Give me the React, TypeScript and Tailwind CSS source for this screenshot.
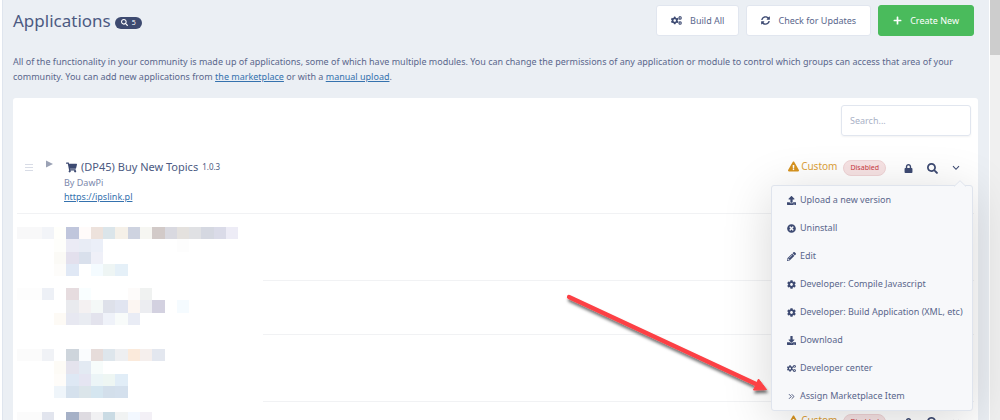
import React, { useState } from 'react';
import {
  FaCog,
  FaCogs,
  FaDownload,
  FaExclamationTriangle,
  FaLock,
  FaPencilAlt,
  FaPlus,
  FaSearch,
  FaShoppingCart,
  FaSyncAlt,
  FaTimesCircle,
  FaUpload,
} from 'react-icons/fa';

type Cell = [col: number, row: number, color: string];

interface HiddenApp {
  id: number;
  rows: number;
  className: string;
  cells: Cell[];
}

function AngleDoubleRight({ className }: { className?: string }) {
  return (
    <svg viewBox="0 0 9 9" className={className} fill="none" stroke="currentColor" strokeWidth="0.9">
      <path d="M2 2.200 4.300 4.500 2 6.800M4.700 2.200 7 4.500 4.700 6.800" />
    </svg>
  );
}

const menuItems = [
  { label: 'Upload a new version', icon: FaUpload },
  { label: 'Uninstall', icon: FaTimesCircle },
  { label: 'Edit', icon: FaPencilAlt },
  { label: 'Developer: Compile Javascript', icon: FaCog },
  { label: 'Developer: Build Application (XML, etc)', icon: FaCog },
  { label: 'Download', icon: FaDownload },
  { label: 'Developer center', icon: FaCogs },
  { label: 'Assign Marketplace Item', icon: AngleDoubleRight },
];

const hiddenApps: HiddenApp[] = [
  {
    id: 2,
    rows: 4,
    className: 'h-[67px] pt-[13px]',
    cells: [
      [0, 0, '#f8f8f9'], [1, 0, '#f8f8f9'], [2, 0, '#f2f4f8'], [3, 0, '#fffffb'], [4, 0, '#c0c6dc'],
      [5, 0, '#fffbfa'], [6, 0, '#ede2dc'], [7, 0, '#dbe5ea'], [8, 0, '#f5f0e8'], [9, 0, '#ced3e0'],
      [10, 0, '#f6f6f2'], [11, 0, '#d2cac8'], [12, 0, '#d9d9e0'], [13, 0, '#e4e1de'], [14, 0, '#e0e1e4'],
      [15, 0, '#d5d8e1'], [16, 0, '#dadbe8'], [17, 0, '#edecf6'],
      [3, 1, '#fefefb'], [4, 1, '#ebebf5'], [5, 1, '#e8ecf5'], [6, 1, '#ebeff8'], [13, 1, '#fdfdfd'],
      [3, 2, '#fbfaf6'], [4, 2, '#e3e0ed'], [5, 2, '#d9e0ec'], [6, 2, '#eff0f8'],
      [3, 3, '#fdfcfa'], [4, 3, '#e0e8f5'], [6, 3, '#f4fbff'], [7, 3, '#eef5f4'], [8, 3, '#e5f0f8'],
    ],
  },
  {
    id: 3,
    rows: 3,
    className: 'h-[54px] pt-[7px]',
    cells: [
      [0, 0, '#fdfdfd'], [1, 0, '#fdfdfd'], [2, 0, '#edf0f6'], [4, 0, '#e6dcdf'], [5, 0, '#f9feff'],
      [9, 0, '#fdfbfa'], [10, 0, '#f0f2f1'],
      [4, 1, '#e9eaee'], [5, 1, '#f4f1f2'], [6, 1, '#f4f8f7'], [7, 1, '#dee1ea'], [8, 1, '#e1e5f1'],
      [9, 1, '#fcf6f2'], [10, 1, '#ecedf1'], [11, 1, '#d3d1e0'], [13, 1, '#f5fbff'],
      [3, 2, '#fdfaf5'], [4, 2, '#e7e8f1'], [5, 2, '#e9ecf2'], [6, 2, '#e3e3ed'], [7, 2, '#eff2f9'],
      [8, 2, '#f8fbfa'], [9, 2, '#e9ecf5'],
    ],
  },
  {
    id: 4,
    rows: 4,
    className: 'h-[67px] pt-[14px]',
    cells: [
      [0, 0, '#fbfbfb'], [1, 0, '#fbfbfb'], [2, 0, '#f0f2f6'], [4, 0, '#ced5dc'], [5, 0, '#fafcfe'],
      [6, 0, '#e6dcda'], [7, 0, '#dee6ec'], [8, 0, '#eeeff1'], [9, 0, '#fbeadb'], [10, 0, '#f5efed'],
      [11, 0, '#e3e7ef'],
      [3, 1, '#fdfbf6'], [4, 1, '#e4e3ed'], [5, 1, '#e3eaf3'], [6, 1, '#f7fcfb'],
      [3, 2, '#fefcf9'], [4, 2, '#dee8f4'], [5, 2, '#e5e5f2'], [6, 2, '#ecf5f7'], [7, 2, '#eef6f3'],
      [8, 2, '#e1edf7'],
      [3, 3, '#eff5fa'], [4, 3, '#d5e1ed'], [5, 3, '#dbe5ea'], [6, 3, '#d5e6f0'], [7, 3, '#d3dfeb'],
      [8, 3, '#d4e0ed'],
    ],
  },
];

const lastCells: Cell[] = [
  [0, 0, '#fbfbfb'], [1, 0, '#fbfbfb'], [2, 0, '#e2e5ee'], [4, 0, '#a6b1c7'], [5, 0, '#dedbe1'],
  [6, 0, '#f1f1f3'], [7, 0, '#cadbe4'], [8, 0, '#f1f3f3'], [9, 0, '#f3f8ff'], [10, 0, '#f3f0f6'],
];

function Mosaic({ cells, rows }: { cells: Cell[]; rows: number }) {
  return (
    <svg viewBox={`0 0 20 ${rows}`} className="w-[246px] shrink-0 self-start" shapeRendering="crispEdges" aria-hidden="true">
      {cells.map(([x, y, fill]) => (
        <rect key={`${x}-${y}`} x={x} y={y} width="1" height="1" fill={fill} />
      ))}
    </svg>
  );
}

function AppControls({ onToggle }: { onToggle?: () => void }) {
  return (
    <div className="flex items-center text-[#3d4a72]">
      <span className="flex items-center gap-[2px] pb-1 text-[10px] leading-4 text-[#dda23a]">
        <FaExclamationTriangle className="h-[11px] w-[11px] text-[#d7931f]" />
        Custom
      </span>
      <span className="ml-[6px] rounded-full border border-[#f0d4d6] bg-[#f7e3e4] px-[6px] text-[7px] leading-[14px] text-[#cb3a3f]">
        Disabled
      </span>
      <button type="button" aria-label="Permissions" className="ml-[18px]">
        <FaLock className="h-[9px] w-[9px]" />
      </button>
      <button type="button" aria-label="Details" className="ml-[14px]">
        <FaSearch className="h-[11px] w-[11px]" />
      </button>
      <button type="button" aria-label="More options" className="ml-[14px]" onClick={onToggle}>
        <svg viewBox="0 0 8 6" className="h-[6px] w-2" fill="none" stroke="currentColor" strokeWidth="1.1">
          <path d="M1 1.2 4 4.3 7 1.2" />
        </svg>
      </button>
    </div>
  );
}

export default function App() {
  const [menuOpen, setMenuOpen] = useState(true);
  const [search, setSearch] = useState('');

  return (
    <div className="relative flex h-screen overflow-hidden bg-[#ebeff4] font-['Noto_Sans','Open_Sans',sans-serif] text-[#5a678c]">
      <div className="w-[2px] shrink-0 bg-white" />
      <main className="min-w-0 flex-1 border-l border-[#dfe5ee] pl-[10px] pr-[11px]">
        <header className="flex items-center justify-between pr-1 pt-[5px]">
          <h1 className="flex items-center gap-1 text-[17px] leading-6 text-[#4c5a82]">
            Applications
            <span className="mt-1 flex items-center gap-1 rounded-full bg-[#3d4a70] px-[6px] text-[7px] leading-3 text-white">
              <FaSearch className="h-[7px] w-[7px]" />
              5
            </span>
          </h1>
          <div className="flex gap-[7px] text-[9px]">
            <button type="button" className="flex h-[31px] items-center gap-2 rounded-[3px] border border-[#e1e6ef] bg-white px-[14px]">
              <FaCogs className="h-[11px] w-[11px] text-[#3d4a72]" />
              Build All
            </button>
            <button type="button" className="flex h-[31px] items-center gap-2 rounded-[3px] border border-[#e1e6ef] bg-white px-[14px]">
              <FaSyncAlt className="h-[9px] w-[9px] text-[#3d4a72]" />
              Check for Updates
            </button>
            <button type="button" className="flex h-[31px] items-center gap-2 rounded-[3px] border border-[#4abb5c] bg-[#4abb5c] px-[14px] text-white">
              <FaPlus className="h-[9px] w-[9px]" />
              Create New
            </button>
          </div>
        </header>

        <p className="mt-[18px] text-[9px] leading-[15px]">
          All of the functionality in your community is made up of applications, some of which have multiple modules. You
          can change the permissions of any application or module to control which groups can access that area of your
          community. You can add new applications from{' '}
          <a href="#marketplace" className="text-[#3572ae] underline">the marketplace</a> or with a{' '}
          <a href="#upload" className="text-[#3572ae] underline">manual upload</a>.
        </p>

        <section className="mt-[14px] rounded-[3px] bg-white px-1 pb-5 pt-[7px]">
          <div className="flex justify-end pr-[3px]">
            <input
              type="search"
              aria-label="Search"
              placeholder="Search..."
              value={search}
              onChange={(e) => setSearch(e.target.value)}
              className="h-[31px] w-[130px] rounded-[3px] border border-[#e1e6ef] px-2 text-[9px] shadow-xs outline-none placeholder:text-[#a9b1c6]"
            />
          </div>

          <ul>
            <li className="relative flex h-[78px] items-start justify-between border-b border-[#f1f2f4] pr-[14px] pt-[22px]">
              <div className="flex">
                <svg viewBox="0 0 8 7" className="ml-2 mt-[6px] h-[7px] w-2 text-[#d8dce6]" stroke="currentColor" aria-hidden="true">
                  <path d="M0 .5h8M0 3.5h8M0 6.5h8" />
                </svg>
                <svg viewBox="0 0 7 8" className="ml-[13px] mt-[2px] h-2 w-[7px]" fill="#9ba2b5" aria-hidden="true">
                  <path d="M0 .5 7 4 0 7.5z" />
                </svg>
                <div className="ml-[11px]">
                  <h2 className="flex items-center gap-1 pl-[2px] text-[11px] leading-[18px] text-[#4c5a82]">
                    <FaShoppingCart className="h-[11px] w-[11px] text-[#3d4a72]" />
                    (DP45) Buy New Topics
                    <span className="text-[8px]">1.0.3</span>
                  </h2>
                  <p className="text-[9px] leading-[14px] text-[#7c88ab]">By DawPi</p>
                  <a href="https://ipslink.pl" className="block text-[9px] leading-[13px] text-[#3572ae] underline">https://ipslink.pl</a>
                </div>
              </div>
              <AppControls onToggle={() => setMenuOpen(!menuOpen)} />

              {menuOpen && (
                <div className="absolute right-[1px] top-[49px] z-10 w-[202px] rounded-[3px] border border-[#dfe4ed] bg-[#f7f8fa] shadow-[0_8px_50px_rgba(0,0,0,0.16)]">
                  <svg viewBox="0 0 12 7" className="absolute -top-[6px] right-[6px] h-[7px] w-3" aria-hidden="true">
                    <path d="M0 6.5 6 .7 12 6.5" fill="#f7f8fa" stroke="#dfe4ed" />
                  </svg>
                  <ul className="text-[9px]">
                    {menuItems.map(({ label, icon: Icon }) => (
                      <li key={label}>
                        <button type="button" className="flex h-7 w-full items-center gap-1 whitespace-nowrap pl-[15px]">
                          <Icon className="h-[9px] w-[9px] shrink-0 text-[#3d4a72]" />
                          {label}
                        </button>
                      </li>
                    ))}
                  </ul>
                </div>
              )}
            </li>

            {hiddenApps.map((app) => (
              <li key={app.id} className="flex">
                <div className={app.className}>
                  <Mosaic cells={app.cells} rows={app.rows} />
                </div>
                <div className="flex-1 border-b border-[#f1f2f4]" />
              </li>
            ))}

            <li className="flex items-start justify-between pr-[14px] pt-[10px]">
              <Mosaic cells={lastCells} rows={1} />
              <AppControls />
            </li>
          </ul>
        </section>
      </main>

      <div className="w-[11px] shrink-0 border-l border-white bg-[#f0f0f0]">
        <div className="h-[55px] bg-[#cdcdcd]" />
      </div>

      {/* callout arrow pointing at the last menu item */}
      <svg viewBox="0 0 210 110" className="pointer-events-none absolute left-[562px] top-[290px] z-20 h-[110px] w-[210px]" aria-hidden="true">
        <defs>
          <filter id="arrow-shadow" x="-10%" y="-10%" width="120%" height="130%">
            <feDropShadow dx="1" dy="3" stdDeviation="1.5" floodColor="#000" floodOpacity="0.55" />
          </filter>
        </defs>
        <g filter="url(#arrow-shadow)">
          <path d="M7 7 194 94" stroke="#fc4144" strokeWidth="4.2" strokeLinecap="round" />
          <path d="M196.500 89 204.500 99.500 191.500 100z" fill="#fc4144" stroke="#fc4144" />
        </g>
      </svg>
    </div>
  );
}
